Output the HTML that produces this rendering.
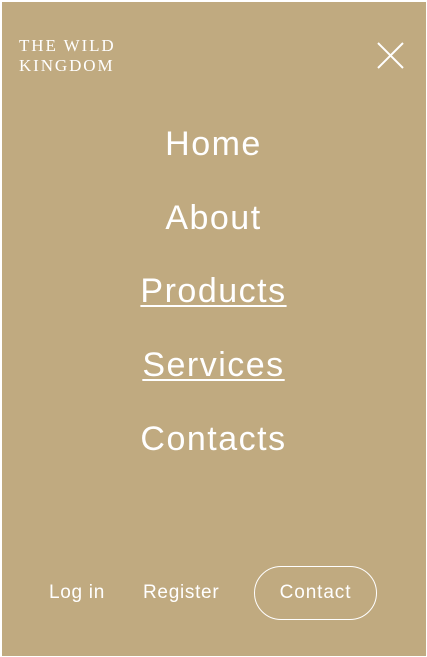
<!DOCTYPE html>
<html><head><style>
html,body{margin:0;padding:0;}
body{width:427px;height:657px;background:#fff;position:relative;overflow:hidden;font-family:"Liberation Sans",sans-serif;color:#fff;}
.bg{position:absolute;left:2px;top:2px;right:1px;bottom:1px;background:#c0aa80;}
.logo{position:absolute;left:19px;top:36px;font-family:"Liberation Serif",serif;font-size:17px;line-height:20px;letter-spacing:1.9px;}
.x{position:absolute;left:376px;top:41px;}
.nav a{position:absolute;left:0;width:427px;text-align:center;font-size:34px;color:#fff;text-decoration:none;letter-spacing:1.5px;}
.u{text-decoration:underline!important;text-decoration-thickness:2px!important;text-underline-offset:3px;}
.b{position:absolute;font-size:19px;top:582px;letter-spacing:0.7px;}
.btn{position:absolute;left:254px;top:566px;width:123px;height:54px;border:1.5px solid #fff;border-radius:28px;box-sizing:border-box;text-align:center;line-height:51px;font-size:19px;letter-spacing:0.9px;}
</style></head><body>
<div class="bg"></div>
<div class="logo">THE WILD<br>KINGDOM</div>
<svg class="x" width="29" height="29" viewBox="0 0 29 29"><path d="M2 2L27 27M27 2L2 27" stroke="#fff" stroke-width="2"/></svg>
<div class="nav">
<a style="top:125px">Home</a>
<a style="top:199px">About</a>
<a class="u" style="top:272px">Products</a>
<a class="u" style="top:346px">Services</a>
<a style="top:420px">Contacts</a>
</div>
<div class="b" style="left:49px">Log in</div>
<div class="b" style="left:143px">Register</div>
<div class="btn">Contact</div>
</body></html>
